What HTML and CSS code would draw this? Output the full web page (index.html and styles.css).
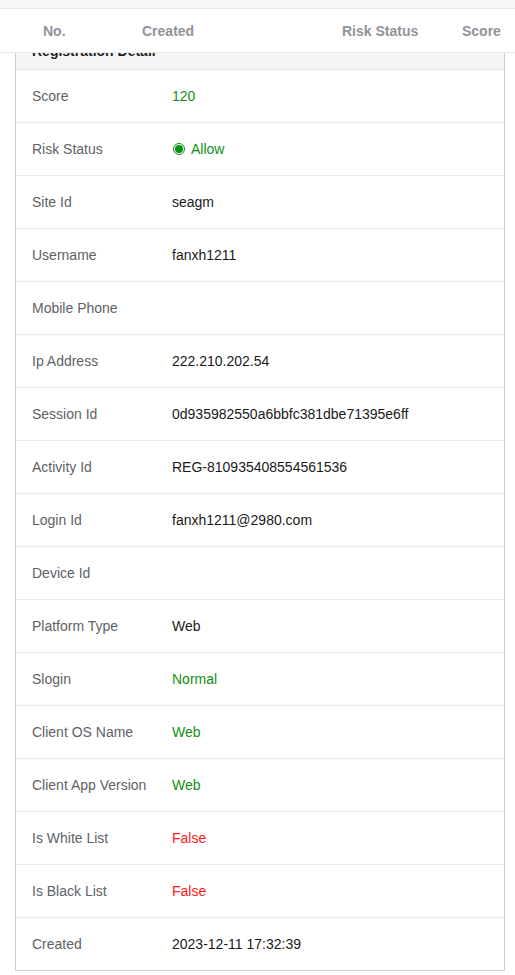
FILE: index.html
```html
<!DOCTYPE html>
<html>
<head>
<meta charset="utf-8">
<link rel="stylesheet" href="styles.css">
</head>
<body>
<div class="topbar">
  <div class="thead">
    <span class="th th-no">No.</span>
    <span class="th th-created">Created</span>
    <span class="th th-risk">Risk Status</span>
    <span class="th th-score">Score</span>
  </div>
</div>
<main class="page">
  <section class="card">
    <div class="card-header">Registration Detail</div>
    <div class="row"><div class="label">Score</div><div class="value green">120</div></div>
    <div class="row"><div class="label">Risk Status</div><div class="value green status"><span class="radio"></span>Allow</div></div>
    <div class="row"><div class="label">Site Id</div><div class="value">seagm</div></div>
    <div class="row"><div class="label">Username</div><div class="value">fanxh1211</div></div>
    <div class="row"><div class="label">Mobile Phone</div><div class="value"></div></div>
    <div class="row"><div class="label">Ip Address</div><div class="value">222.210.202.54</div></div>
    <div class="row"><div class="label">Session Id</div><div class="value">0d935982550a6bbfc381dbe71395e6ff</div></div>
    <div class="row"><div class="label">Activity Id</div><div class="value">REG-810935408554561536</div></div>
    <div class="row"><div class="label">Login Id</div><div class="value">fanxh1211@2980.com</div></div>
    <div class="row"><div class="label">Device Id</div><div class="value"></div></div>
    <div class="row"><div class="label">Platform Type</div><div class="value">Web</div></div>
    <div class="row"><div class="label">Slogin</div><div class="value green">Normal</div></div>
    <div class="row"><div class="label">Client OS Name</div><div class="value green">Web</div></div>
    <div class="row"><div class="label">Client App Version</div><div class="value green">Web</div></div>
    <div class="row"><div class="label">Is White List</div><div class="value red">False</div></div>
    <div class="row"><div class="label">Is Black List</div><div class="value red">False</div></div>
    <div class="row"><div class="label">Created</div><div class="value">2023-12-11 17:32:39</div></div>
  </section>
</main>
</body>
</html>
```

FILE: styles.css
```css
* { box-sizing: border-box; }
html, body {
  margin: 0;
  padding: 0;
  background: #ffffff;
  font-family: "Liberation Sans", Arial, sans-serif;
  font-size: 14px;
}
.topbar {
  position: absolute;
  top: 0;
  left: 0;
  right: 0;
  z-index: 2;
  background: #f6f7f8;
  padding-top: 8px;
}
.thead {
  height: 45px;
  background: #ffffff;
  border-top: 1px solid #e6ebf0;
  border-bottom: 1px solid #e6ebf0;
  position: relative;
  display: flex;
  align-items: center;
  font-weight: bold;
  color: #909399;
  line-height: 20px;
}
.th-no { margin-left: 43px; width: 99px; }
.th-created { width: 200px; }
.th-risk { width: 120px; }
.th-score { }
.page {
  padding: 24px 10px 0 15px;
}
.card {
  width: 490px;
  border: 1px solid #cfcfcf;
  background: #ffffff;
}
.card-header {
  background: #f5f5f5;
  padding: 16px 16px 8px;
  line-height: 20px;
  font-weight: bold;
  color: #1f1f1f;
  border-bottom: 1px solid #e8e8e8;
}
.row {
  display: flex;
  align-items: center;
  height: 53px;
  border-bottom: 1px solid #ebebeb;
  line-height: 20px;
}
.row:last-child {
  border-bottom: none;
  height: 52px;
}
.label {
  width: 156px;
  padding-left: 16px;
  color: #606266;
}
.value {
  color: #1a1a1a;
}
.green { color: #0f9015; }
.red { color: #ff1a1a; }
.status {
  display: flex;
  align-items: center;
}
.radio {
  width: 12px;
  height: 12px;
  border-radius: 50%;
  border: 1px solid #0f9015;
  position: relative;
  margin: 0 6px 0 1px;
}
.radio::after {
  content: "";
  position: absolute;
  left: 1px;
  top: 1px;
  width: 8px;
  height: 8px;
  border-radius: 50%;
  background: #0f9015;
}
```
